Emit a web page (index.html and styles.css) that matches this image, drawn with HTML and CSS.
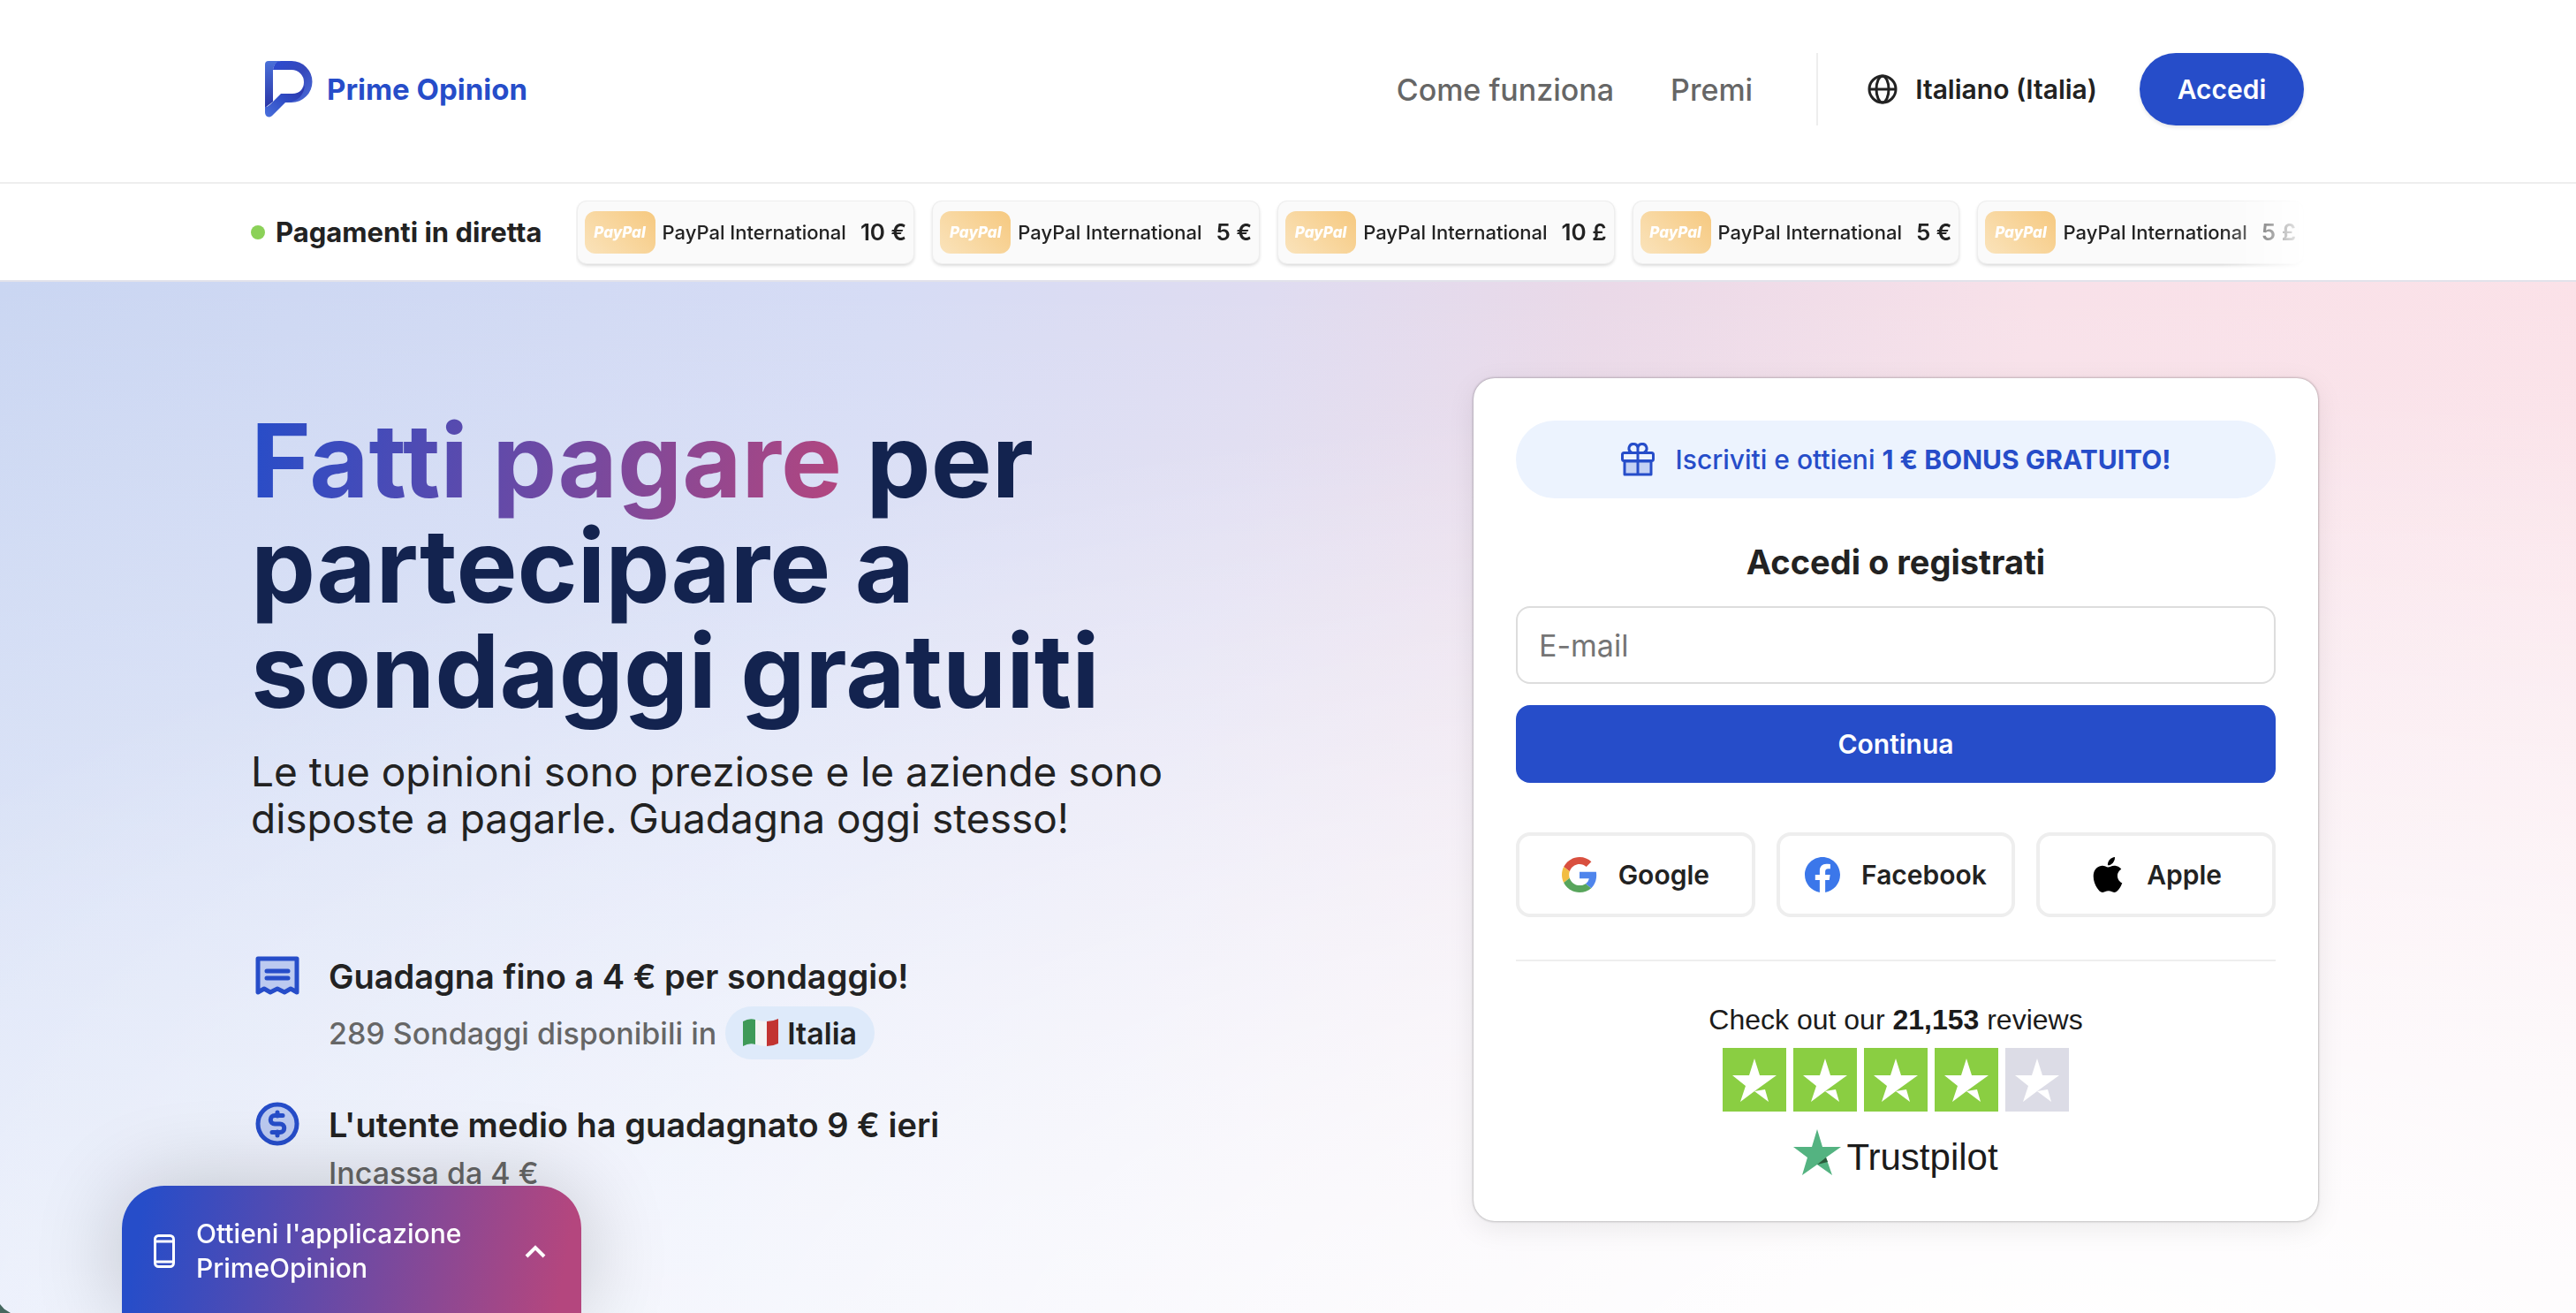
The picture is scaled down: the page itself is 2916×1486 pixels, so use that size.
FILE: index.html
```html
<!DOCTYPE html>
<html lang="it">
<head>
  <meta charset="utf-8">
  <title>Prime Opinion</title>
  <link rel="stylesheet" href="styles.css">
</head>
<body>
  <header class="header">
    <div class="container header-inner">
      <a href="#" class="logo">
        <svg width="54" height="64" viewBox="0 0 54 64">
          <defs>
            <linearGradient id="lg-left" x1="0" y1="0" x2="0" y2="1">
              <stop offset="0" stop-color="#4a70d8"/>
              <stop offset="1" stop-color="#2a35a6"/>
            </linearGradient>
            <linearGradient id="lg-bowl" x1="0" y1="0" x2="1" y2="1">
              <stop offset="0" stop-color="#2b4ad0"/>
              <stop offset="0.5" stop-color="#3648bb"/>
              <stop offset="1" stop-color="#4a6edb"/>
            </linearGradient>
            <linearGradient id="lg-tail" x1="0" y1="1" x2="1" y2="0">
              <stop offset="0" stop-color="#4a70dc"/>
              <stop offset="0.5" stop-color="#2f4cc4"/>
              <stop offset="1" stop-color="#2a30a4"/>
            </linearGradient>
          </defs>
          <path fill="url(#lg-left)" d="M4 0h14c-5 1-8 4-9 10v36L0 53V4a4 4 0 0 1 4-4z"/>
          <path fill="url(#lg-bowl)" d="M18 0h12a23 23 0 0 1 0 47h-8l5-9h3a14 14 0 0 0 0-28H9C10 4 13 0 18 0z"/>
          <path fill="url(#lg-tail)" d="M45 25c0 14-8 21-20 22h-2L9 61c-3 4-9 3-9-3v-6c3 0 5-2 9-6l9-9h13c8 0 14-5 14-12z"/>
        </svg>
        <span>Prime Opinion</span>
      </a>
      <nav class="nav">
        <a href="#">Come funziona</a>
        <a href="#">Premi</a>
      </nav>
      <div class="header-actions">
        <button class="lang-button">
          <svg width="34" height="34" viewBox="0 0 34 34" fill="none" stroke="#222" stroke-width="3">
            <circle cx="17" cy="17" r="15"/>
            <ellipse cx="17" cy="17" rx="7" ry="15"/>
            <path d="M2 17h30"/>
          </svg>
          Italiano (Italia)
        </button>
        <button class="login-button">Accedi</button>
      </div>
    </div>
  </header>

  <section class="live">
    <div class="container live-inner">
      <span class="live-dot"></span>
      <h2>Pagamenti in diretta</h2>
      <div class="payments">
        <div class="payment"><span class="paypal">PayPal</span><span>PayPal International</span><b>10 €</b></div>
        <div class="payment"><span class="paypal">PayPal</span><span>PayPal International</span><b>5 €</b></div>
        <div class="payment"><span class="paypal">PayPal</span><span>PayPal International</span><b>10 £</b></div>
        <div class="payment"><span class="paypal">PayPal</span><span>PayPal International</span><b>5 €</b></div>
        <div class="payment"><span class="paypal">PayPal</span><span>PayPal International</span><b>5 £</b></div>
      </div>
    </div>
  </section>

  <main class="hero">
    <div class="container hero-inner">
      <div class="intro">
        <h1><span class="gradient-text">Fatti pagare</span> per<br>partecipare a<br>sondaggi gratuiti</h1>
        <p class="lead">Le tue opinioni sono preziose e le aziende sono<br>disposte a pagarle. Guadagna oggi stesso!</p>
        <ul class="benefits">
          <li>
            <svg width="50" height="50" viewBox="0 0 50 50" fill="none" stroke="#264dc9" stroke-width="5" stroke-linejoin="round">
              <path fill="#bccaf0" d="M3 6h44v38l-7-4-7 4-8-4-8 4-7-4-7 4z"/>
              <path stroke-linecap="round" d="M13 20h24M13 28h24"/>
            </svg>
            <div>
              <h3>Guadagna fino a 4 € per sondaggio!</h3>
              <p>289 Sondaggi disponibili in
                <span class="country">
                  <svg width="40" height="32" viewBox="0 0 40 32">
                    <path fill="#3f9a58" d="M0 3q7-4 14-2v28q-7-2-14 2z"/>
                    <path fill="#f4f4f4" d="M14 1q6 2 13 2v28q-7 0-13-2z"/>
                    <path fill="#c23431" d="M27 3q7 0 13-3v28q-6 3-13 3z"/>
                  </svg>
                  Italia
                </span>
              </p>
            </div>
          </li>
          <li>
            <svg width="50" height="50" viewBox="0 0 50 50" fill="none" stroke="#264dc9" stroke-width="5">
              <circle cx="25" cy="25" r="22" fill="#bccaf0"/>
              <path stroke-linecap="round" stroke-linejoin="round" d="M25 12v4M25 34v4M31 15.500H22a4.500 4.500 0 0 0 0 9.500h6a4.500 4.500 0 0 1 0 9.500h-9"/>
            </svg>
            <div>
              <h3>L'utente medio ha guadagnato 9 € ieri</h3>
              <p>Incassa da 4 €</p>
            </div>
          </li>
        </ul>
      </div>

      <div class="card">
        <div class="bonus">
          <svg width="38" height="38" viewBox="0 0 38 38" fill="none" stroke="#264dc9" stroke-width="3" stroke-linejoin="round">
            <path fill="#c3d1f4" d="M4 21h30v15H4z"/>
            <rect x="1.500" y="11.500" width="35" height="9" rx="2" fill="#ecf3fe"/>
            <path d="M19 11v25M19 11V6a5 5 0 1 0-7 5M19 6a5 5 0 1 1 7 5"/>
          </svg>
          <span>Iscriviti e ottieni <b>1 € BONUS GRATUITO!</b></span>
        </div>
        <h2>Accedi o registrati</h2>
        <form>
          <input type="email" placeholder="E-mail" aria-label="E-mail">
          <button type="button" class="continue-button">Continua</button>
        </form>
        <div class="social">
          <button>
            <svg width="40" height="40" viewBox="0 0 48 48">
              <path fill="#d9503f" d="M24 9.500c3.540 0 6.710 1.220 9.210 3.600l6.850-6.850C35.900 2.380 30.470 0 24 0 14.620 0 6.510 5.380 2.560 13.220l7.980 6.190C12.430 13.720 17.740 9.500 24 9.500z"/>
              <path fill="#4f85ec" d="M46.980 24.550c0-1.570-.15-3.090-.38-4.550H24v9.020h12.940c-.58 2.960-2.260 5.480-4.780 7.180l7.730 6c4.510-4.180 7.090-10.360 7.090-17.650z"/>
              <path fill="#f2bd42" d="M10.530 28.590c-.48-1.450-.76-2.990-.76-4.590s.27-3.140.76-4.590l-7.980-6.190C.92 16.460 0 20.120 0 24c0 3.880.92 7.540 2.560 10.780l7.970-6.190z"/>
              <path fill="#58a55c" d="M24 48c6.480 0 11.930-2.130 15.890-5.810l-7.730-6c-2.150 1.450-4.920 2.300-8.160 2.300-6.260 0-11.570-4.220-13.470-9.910l-7.980 6.190C6.510 42.620 14.620 48 24 48z"/>
            </svg>
            Google
          </button>
          <button>
            <svg width="40" height="40" viewBox="0 0 24 24">
              <path fill="#3b77ea" d="M24 12.070C24 5.400 18.630 0 12 0S0 5.400 0 12.070C0 18.100 4.390 23.090 10.130 24v-8.440H7.080v-3.490h3.050V9.410c0-3.020 1.790-4.690 4.530-4.690 1.310 0 2.690.24 2.690.24v2.970h-1.520c-1.490 0-1.950.93-1.950 1.880v2.260h3.320l-.53 3.490h-2.790V24C19.610 23.090 24 18.100 24 12.070z"/>
            </svg>
            Facebook
          </button>
          <button>
            <svg width="40" height="40" viewBox="0 0 24 24">
              <path d="M12.150 6.900c-.95 0-2.420-1.080-3.960-1.040-2.040.03-3.910 1.180-4.960 3.010-2.120 3.680-.55 9.100 1.520 12.090 1.010 1.450 2.210 3.090 3.790 3.040 1.520-.07 2.090-.99 3.930-.99 1.830 0 2.350.99 3.960.95 1.640-.03 2.680-1.480 3.680-2.950 1.160-1.690 1.640-3.320 1.660-3.410-.04-.01-3.180-1.220-3.220-4.860-.03-3.040 2.480-4.490 2.600-4.560-1.430-2.090-3.620-2.320-4.390-2.380-2-.16-3.680 1.090-4.610 1.090zM15.530 3.830c.84-1.010 1.400-2.430 1.240-3.830-1.210.05-2.660.81-3.530 1.820-.78.900-1.450 2.340-1.270 3.710 1.340.1 2.720-.69 3.560-1.700"/>
            </svg>
            Apple
          </button>
        </div>
        <a href="#" class="trustpilot">
          <span class="reviews">Check out our <b>21,153</b> reviews</span>
          <span class="stars">
            <svg class="star" viewBox="0 0 72 72"><path d="M36 12l6 19h19L36 49 20 61l6-18-15-12h19zM36 49l12-2 4 14z"/></svg>
            <svg class="star" viewBox="0 0 72 72"><path d="M36 12l6 19h19L36 49 20 61l6-18-15-12h19zM36 49l12-2 4 14z"/></svg>
            <svg class="star" viewBox="0 0 72 72"><path d="M36 12l6 19h19L36 49 20 61l6-18-15-12h19zM36 49l12-2 4 14z"/></svg>
            <svg class="star" viewBox="0 0 72 72"><path d="M36 12l6 19h19L36 49 20 61l6-18-15-12h19zM36 49l12-2 4 14z"/></svg>
            <svg class="star star-empty" viewBox="0 0 72 72"><path d="M36 12l6 19h19L36 49 20 61l6-18-15-12h19zM36 49l12-2 4 14z"/></svg>
          </span>
          <span class="brand">
            <svg width="54" height="52" viewBox="0 0 54 52">
              <path fill="#54b381" d="M27 0l6 20h21L37 32l7 20-17-12-17 12 6-20L0 20h21z"/>
              <path fill="#2b5a3a" d="M37 32l2 5-12 3z"/>
            </svg>
            <span>Trustpilot</span>
          </span>
        </a>
      </div>
    </div>
  </main>

  <button class="app-banner">
    <svg width="24" height="38" viewBox="0 0 24 38" fill="none" stroke="#fff" stroke-width="3">
      <rect x="1.500" y="1.500" width="21" height="35" rx="4"/>
      <path d="M1 8h22M1 31h22"/>
    </svg>
    <span>Ottieni l'applicazione PrimeOpinion</span>
    <svg width="24" height="16" viewBox="0 0 24 16" fill="none" stroke="#fff" stroke-width="4">
      <path d="M2 14L12 4l10 10"/>
    </svg>
  </button>
</body>
</html>
```
FILE: styles.css
```css
* {
  box-sizing: border-box;
}
body {
  margin: 0;
  min-height: 100vh;
  display: flex;
  flex-direction: column;
  font-family: Inter, "Open Sans", sans-serif;
  font-size: 30px;
  color: #222;
  background: #fff;
}
h1, h2, h3, p, ul {
  margin: 0;
  padding: 0;
}
a {
  color: inherit;
  text-decoration: none;
}
button, input {
  font: inherit;
  color: inherit;
}
button {
  border: none;
  padding: 0;
  background: none;
  cursor: pointer;
}
svg {
  flex-shrink: 0;
}
.container {
  width: 100%;
  max-width: 2348px;
  margin: 0 auto;
}

/* header */
.header {
  padding: 60px 0 64px;
  border-bottom: 2px solid #eee;
}
.header-inner {
  display: flex;
  align-items: center;
  padding: 0 24px 0 16px;
}
.logo {
  display: flex;
  align-items: center;
  gap: 16px;
  margin-right: auto;
  font-size: 33px;
  font-weight: 700;
  color: #264dc9;
}
.nav {
  display: flex;
  gap: 64px;
  font-size: 34px;
  font-weight: 500;
  color: #666;
}
.header-actions {
  display: flex;
  align-items: center;
  gap: 48px;
  margin-left: 72px;
  padding-left: 56px;
  border-left: 2px solid #eee;
}
.lang-button {
  display: flex;
  align-items: center;
  gap: 20px;
  font-weight: 600;
}
.login-button {
  width: 186px;
  height: 82px;
  border-radius: 41px;
  background: #264dc9;
  color: #fff;
  font-weight: 600;
  box-shadow: 0 2px 4px rgba(0,0,0,0.1);
}

/* live payments */
.live {
  border-bottom: 2px solid #e2e2ea;
}
.live-inner {
  display: flex;
  align-items: center;
  height: 109px;
  padding-right: 20px;
}
.live-dot {
  width: 16px;
  height: 16px;
  margin-right: 12px;
  border-radius: 50%;
  background: #8bd158;
}
.live h2 {
  margin-right: 38px;
  font-size: 31px;
  white-space: nowrap;
}
.payments {
  flex: 1;
  min-width: 0;
  display: flex;
  gap: 22px;
  padding: 12px 2px;
  overflow: hidden;
  mask-image: linear-gradient(to right, #000 95%, transparent);
}
.payment {
  flex-shrink: 0;
  display: flex;
  align-items: center;
  height: 70px;
  padding: 0 8px;
  border-radius: 10px;
  background: #fafafa;
  box-shadow: 0 0 0 1px #eee, 0 2px 4px rgba(0,0,0,0.2);
  font-size: 22px;
  font-weight: 500;
}
.payment b {
  margin-left: 16px;
  font-size: 26px;
  font-weight: 600;
}
.paypal {
  display: flex;
  align-items: center;
  justify-content: center;
  width: 80px;
  height: 48px;
  margin-right: 8px;
  border-radius: 12px;
  background: linear-gradient(45deg, #fae3bb, #f6c980);
  color: #fff;
  font-size: 17px;
  font-weight: 800;
  font-style: italic;
}

/* hero */
.hero {
  flex: 1;
  background:
    radial-gradient(ellipse 100% 95% at 80% 105%, #fff, rgba(255,255,255,0)),
    linear-gradient(to bottom, rgba(248,250,255,0), rgba(248,250,255,0.65)),
    linear-gradient(100deg, #cad6f2, #d6dcf5 32%, #dfdcf1 46%, #ead9e8 58%, #f8e1e9 74%, #fce2e8);
}
.hero-inner {
  display: flex;
  justify-content: space-between;
  align-items: flex-start;
  padding: 109px 8px 102px 0;
}
.intro {
  padding-top: 34px;
}
h1 {
  font-size: 116px;
  line-height: 119px;
  font-weight: 700;
  color: #13234f;
}
.gradient-text {
  background: linear-gradient(100deg, #264dc9, #b4467e);
  background-clip: text;
  color: transparent;
}
.lead {
  margin-top: 28px;
  font-size: 46px;
  line-height: 53px;
}
.benefits {
  margin-top: 126px;
  list-style: none;
}
.benefits li {
  display: flex;
  gap: 33px;
  padding-left: 5px;
}
.benefits li + li {
  margin-top: 40px;
}
.benefits h3 {
  font-size: 38px;
  line-height: 52px;
  font-weight: 600;
}
.benefits p {
  display: flex;
  align-items: center;
  min-height: 56px;
  font-size: 34px;
  font-weight: 500;
  color: #666;
}
.country {
  display: flex;
  align-items: center;
  gap: 10px;
  height: 60px;
  margin: 8px 0 8px 10px;
  padding: 0 20px;
  border-radius: 30px;
  background: #deeafa;
  color: #222;
  font-weight: 600;
}

/* sign up card */
.card {
  width: 956px;
  padding: 48px;
  border-radius: 24px;
  background: #fff;
  box-shadow: 0 0 3px rgba(0,0,0,0.4), 0 8px 32px rgba(0,0,0,0.08);
  text-align: center;
}
.bonus {
  display: flex;
  align-items: center;
  justify-content: center;
  gap: 24px;
  height: 88px;
  border-radius: 44px;
  background: #ecf3fe;
  color: #264dc9;
  font-weight: 500;
}
.bonus b {
  font-weight: 700;
}
.card h2 {
  margin: 48px 0 26px;
  font-size: 38px;
  line-height: 48px;
}
.card input {
  width: 100%;
  height: 88px;
  padding: 0 24px;
  border: 2px solid #ddd;
  border-radius: 16px;
  background: #fff;
  font-size: 34px;
}
.card input::placeholder {
  color: #757575;
}
.continue-button {
  width: 100%;
  height: 88px;
  margin-top: 24px;
  border-radius: 16px;
  background: #264dc9;
  color: #fff;
  font-weight: 600;
}
.social {
  display: grid;
  grid-template-columns: repeat(3, 1fr);
  gap: 24px;
  margin-top: 56px;
  padding-bottom: 48px;
  border-bottom: 2px solid #eee;
}
.social button {
  display: flex;
  align-items: center;
  justify-content: center;
  gap: 24px;
  height: 96px;
  border: 4px solid #eee;
  border-radius: 16px;
  font-weight: 600;
}
.trustpilot {
  display: flex;
  flex-direction: column;
  align-items: center;
  margin-top: 46px;
  font-family: "Liberation Sans", Arial, sans-serif;
  color: #1b1b1b;
}
.reviews {
  font-size: 32px;
  line-height: 40px;
}
.stars {
  display: flex;
  gap: 8px;
  margin: 12px 0 16px;
}
.star {
  width: 72px;
  height: 72px;
  background: #8ace42;
  fill: #fff;
}
.star-empty {
  background: #dcdce6;
}
.brand {
  display: flex;
  align-items: center;
  gap: 6px;
  font-size: 42px;
  line-height: 48px;
}
.brand span {
  padding-top: 12px;
}

/* app banner over the page */
.app-banner {
  position: fixed;
  left: 138px;
  bottom: 0;
  display: flex;
  align-items: center;
  width: 520px;
  height: 144px;
  padding: 4px 40px 0 36px;
  border-radius: 48px 48px 0 0;
  background: linear-gradient(100deg, #264dc9 5%, #b4467e 95%);
  box-shadow: 0 0 100px rgba(0,0,0,0.2);
  color: #fff;
  line-height: 39px;
  font-weight: 500;
  text-align: left;
}
.app-banner span {
  flex: 1;
  padding: 0 24px;
}

/* dark corner at the bottom left of the window */
body::after {
  content: "";
  position: fixed;
  left: 0;
  bottom: 0;
  width: 12px;
  height: 10px;
  background: #46685f;
  clip-path: polygon(0 0, 40% 55%, 100% 100%, 0 100%);
}
```
